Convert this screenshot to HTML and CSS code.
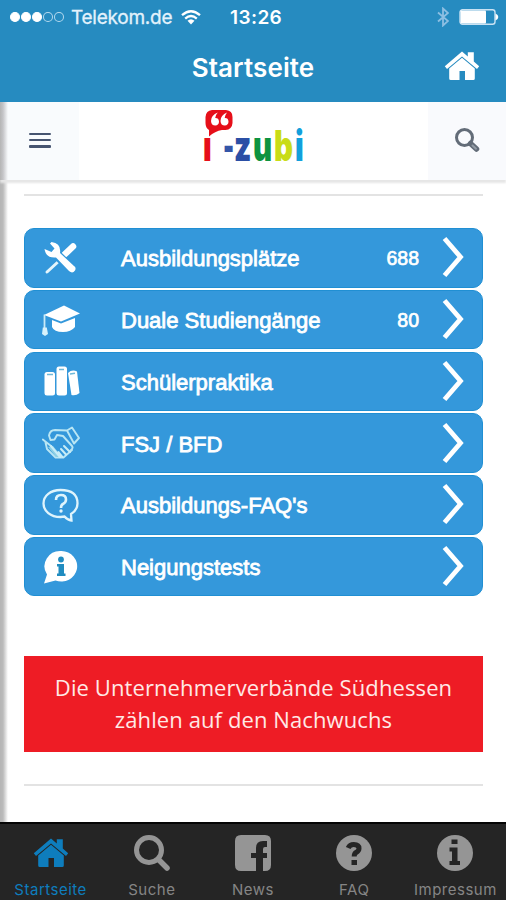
FILE: index.html
```
<!DOCTYPE html>
<html lang="de">
<head>
    <meta charset="UTF-8">
    <title>i-zubi</title>
    <link rel="stylesheet" href="styles.css">
</head>
<body>
<svg class="defs">
    <symbol id="home" viewBox="0 0 36 30">
        <path d="M.8 15.200L18 .6l5.800 4.900V1.200h6v9.400L35.200 15.200l-2.200 2.700L18 5.400 3 17.900z"/>
        <path d="M5.200 17.500L18 6.700l12.800 10.800V27.500q0 1.500-1.500 1.500H21v-9h-5.500v9H6.700q-1.500 0-1.500-1.500z"/>
    </symbol>
</svg>
<div id="wrap">
    <div class="head">
        <div class="status">
            <div class="dots"><i class="on"></i><i class="on"></i><i class="on"></i><i></i><i></i></div>
            <span class="carrier">Telekom.de</span>
            <svg class="wifi" viewBox="0 0 20 15"><path d="M1 5.200Q10-2.800 19 5.200M4.200 8.600Q10 3.500 15.800 8.600" fill="none" stroke="#fff" stroke-width="2.300"/><path d="M6.500 10.800Q10 7.800 13.500 10.800L10 14.500z" fill="#fff"/></svg>
            <span class="time">13:26</span>
            <svg class="bt" viewBox="0 0 12 20"><path d="M1 5.500l10 8.500-5 4.500v-17l5 4.500L1 14.500" fill="none" stroke="#8dbfe2" stroke-width="1.800"/></svg>
            <svg class="battery" viewBox="0 0 40 16"><rect x="1" y=".8" width="35" height="14.400" rx="2.500" fill="none" stroke="#c9e2f3" stroke-width="1.400"/><rect x="1.500" y="1.500" width="25.500" height="13" rx="1" fill="#fff"/><path d="M36.500 4.500q2.800 1 2.800 3.500t-2.800 3.500z" fill="#fff"/></svg>
        </div>
        <div class="title">
            <h1>Startseite</h1>
            <svg class="home"><use href="#home"/></svg>
        </div>
    </div>
    <div class="page">
        <div class="bar">
            <div class="menu"><span></span><span></span><span></span></div>
            <div class="logo">
                <svg class="bubble" viewBox="0 0 28 28"><path d="M7 1H21Q27.500 1.500 27.500 8v6q-.5 6.500-7 7H17Q10 22 4 27.500V21Q.5 19 .5 14V8Q1 1.500 7 1z" fill="#e60f19"/><path d="M12.800 3.500Q6 6 6 12q.3 4.500 4.300 4.500 3.700-.3 3.700-4-.3-3.600-3.800-3.400.2-3 2.600-5.600zM22 3.500Q15.500 6 15.500 12q.3 4.500 4.300 4.500 3.700-.3 3.700-4-.3-3.600-3.800-3.400.2-3 2.300-5.600z" fill="#fff"/></svg>
                <b class="l1">ı</b><b class="l2">-</b><b class="l3">z</b><b class="l4">u</b><b class="l5">b</b><b class="l6">i</b>
            </div>
            <div class="find">
                <svg viewBox="0 0 26 26"><circle cx="10.500" cy="10.500" r="8" fill="none" stroke="#636c78" stroke-width="3"/><path d="M16.500 16.500l6 5.500" stroke="#636c78" stroke-width="5.500" stroke-linecap="round"/><path d="M18.500 18.500l3.500 3.200" stroke="#939ba5" stroke-width="2" stroke-linecap="round"/></svg>
            </div>
        </div>
        <div class="content">
            <hr>
            <ul class="list">
                <li>
                    <svg class="ico" viewBox="0 0 38 34"><path d="M5 31L17 20" stroke="#e5f5fb" stroke-width="3" stroke-linecap="round"/><path d="M22.500 13.500L31 5.500" stroke="#fff" stroke-width="6.500" stroke-linecap="round"/><path d="M11 10L29 27.500" stroke="#3498db" stroke-width="9.500"/><path d="M2.500 8Q4 17.500 14 16.500L27 30q3.500 3 6-.5 1.500-3-1-4.500L18 12Q19.500 2.500 9.500 1L8 2.500l4.500 5L9.500 11z" fill="#fff"/></svg>
                    <span class="name">Ausbildungsplätze</span><span class="num">688</span>
                    <svg class="arrow" viewBox="0 0 22 42"><path d="M2.500 2.500L18.500 21 2.500 39.500" /></svg>
                </li>
                <li>
                    <svg class="ico" viewBox="0 0 38 34"><path d="M2 12L22 2.500l16 8L19 18.500z" fill="#fff"/><path d="M2.500 11.500V28" stroke="#c9eaf8" stroke-width="1.800"/><path d="M.8 24.500h4L6 31l-3 2-3-2z" fill="#d8f2fb"/><path d="M10 17l9 3.500L33 15v9q-4 5-12 5-9 0-11-5z" fill="#fff"/></svg>
                    <span class="name">Duale Studiengänge</span><span class="num">80</span>
                    <svg class="arrow" viewBox="0 0 22 42"><path d="M2.500 2.500L18.500 21 2.500 39.500" /></svg>
                </li>
                <li>
                    <svg class="ico" viewBox="0 0 38 34"><rect x="2.500" y="8" width="10.500" height="23.500" rx="2.500" fill="#fff"/><rect x="14.500" y="2.500" width="10.500" height="29" rx="2.500" fill="#fff"/><path d="M26 9q4-4 9-1.500L37.500 29q-3.500 3-8 2z" fill="#fff"/><path d="M5 10.500h6M17 5.500h5M28 10l5-.7" stroke="#6fb9d9" stroke-width="1.500"/></svg>
                    <span class="name">Schülerpraktika</span>
                    <svg class="arrow" viewBox="0 0 22 42"><path d="M2.500 2.500L18.500 21 2.500 39.500" /></svg>
                </li>
                <li>
                    <svg class="ico" viewBox="0 0 38 34"><g fill="none" stroke="#b9e6f4" stroke-width="1.900" stroke-linejoin="round" stroke-linecap="round"><path d="M25 4.500L30 1.500 37 12l-5 5.500zM25 4.500L13 4Q8 4 7 9.500L8.500 14l4-.500 2.500-4.500 6 1 9 10q1.500 2-1 4"/><path d="M.8 13.500L9 20M3.500 16.500L5 23l8.500 8.500h8L30 24"/></g><path d="M6 21l5-1 9 11h-6z" fill="#8cd0e6"/><path d="M9 20l9 11M16.500 26l4 5M19 23l5 5.500M22 20l6 6" stroke="#c8edf7" stroke-width="2" stroke-linecap="round"/></svg>
                    <span class="name">FSJ / BFD</span>
                    <svg class="arrow" viewBox="0 0 22 42"><path d="M2.500 2.500L18.500 21 2.500 39.500" /></svg>
                </li>
                <li>
                    <svg class="ico" viewBox="0 0 38 34"><path d="M18.500 2C8.500 2 1.500 8 1.500 15.500S8.500 29 18.500 29l4-.5Q25.500 32 29.500 32.500l-.5-6.500Q35.500 22 35.500 15.500 35.500 2 18.500 2z" fill="none" stroke="#dff4fc" stroke-width="2.300"/><path d="M14 12q0-5 5-5t5 4.500q0 3-3 4.500-2 1-2 4" fill="none" stroke="#dff4fc" stroke-width="2.600"/><circle cx="19" cy="23" r="1.700" fill="#dff4fc"/></svg>
                    <span class="name">Ausbildungs-FAQ's</span>
                    <svg class="arrow" viewBox="0 0 22 42"><path d="M2.500 2.500L18.500 21 2.500 39.500" /></svg>
                </li>
                <li>
                    <svg class="ico" viewBox="0 0 38 34"><path d="M19.500 1a15.800 15.300 0 1 1-6 29.500L2 33.500l3-9A15.800 15.300 0 0 1 19.500 1z" fill="#fff"/><circle cx="19" cy="9.500" r="2.900" fill="#208cc0"/><path d="M15 14h7v9.500h1.500V26H15v-2.500h1.500v-7H15z" fill="#208cc0"/></svg>
                    <span class="name">Neigungstests</span>
                    <svg class="arrow" viewBox="0 0 22 42"><path d="M2.500 2.500L18.500 21 2.500 39.500" /></svg>
                </li>
            </ul>
            <div class="banner">Die Unternehmerverbände Südhessen<br>zählen auf den Nachwuchs</div>
            <hr>
        </div>
    </div>
    <div class="tabs">
        <a class="active"><svg class="thome"><use href="#home"/></svg><span>Startseite</span></a>
        <a><svg viewBox="0 0 36 36"><circle cx="15" cy="15" r="12.500" fill="none" stroke="#959595" stroke-width="5"/><path d="M24.500 24.500l8.500 8.500" stroke="#959595" stroke-width="5.500" stroke-linecap="round"/></svg><span>Suche</span></a>
        <a><svg viewBox="0 0 36 36"><path d="M6 0h24q6 0 6 6v24q0 6-6 6h-2V23h4v-5h-4v-4q0-2 2-2h2V6h-4q-7 0-7 7v5h-5v5h5v13H6q-6 0-6-6V6q0-6 6-6z"/></svg><span>News</span></a>
        <a><svg viewBox="0 0 36 36"><circle cx="18" cy="18" r="18"/><path d="M12.200 13q1.500-3.500 5.600-3.500 5.200 0 5.200 4 0 2.200-2.600 3.800-2.200 1.200-2.200 4.200" fill="none" stroke="#252525" stroke-width="5"/><path d="M15.500 25h5.500v5h-5.500z" fill="#252525"/></svg><span>FAQ</span></a>
        <a><svg viewBox="0 0 36 36"><circle cx="18" cy="18" r="18"/><path d="M14.500 4.500h6v4.500h-6zM12.500 12.500h8V26H23v4H12.500v-4H15v-9.500h-2.500z" fill="#252525"/></svg><span>Impressum</span></a>
    </div>
</div>
</body>
</html>
```
FILE: styles.css
```
*{
    margin:0;
    padding:0;
    border:0;
    box-sizing: border-box;
    list-style: none;
}
body,html{
    height: 100%;
    overflow: hidden;
}
svg{
    display: block;
    flex-shrink: 0;
}
.defs{
    position: absolute;
    width:0;
    height:0;
}
#wrap{
    width:506px;
    height:900px;
    display: flex;
    flex-direction: column;
    background: #fff;
    font-family: Inter,Roboto,sans-serif;
}
/*head*/
.head{
    height:102px;
    background: #268bc0;
    color: #fff;
}
.status{
    height:34px;
    display: flex;
    align-items: center;
    padding:0 7px 0 10px;
}
.dots{
    display: flex;
    gap:1.200px;
    width:54px;
}
.dots i{
    width:10px;
    height:10px;
    border:1px solid #b5d9ee;
    border-radius: 50%;
}
.dots .on{
    background: #fff;
    border-color: #fff;
}
.carrier{
    width:110px;
    margin-left: 7px;
    font-size: 19px;
    letter-spacing: -.25px;
    color: #e3f2fc;
    -webkit-text-stroke: .3px #e3f2fc;
}
.wifi{
    width:20px;
    height:15px;
}
.time{
    width:60px;
    margin-left: 29px;
    font-size: 19px;
    font-weight: 600;
    letter-spacing: .4px;
}
.bt{
    width:12px;
    height:20px;
    margin-left: auto;
}
.battery{
    width:40px;
    height:16px;
    margin-left: 10px;
}
.title{
    height:66px;
    display: grid;
    grid-template-columns: 80px 1fr 80px;
    align-items: center;
}
.title h1{
    grid-column: 2;
    text-align: center;
    font-size: 26px;
    font-weight: 600;
    letter-spacing: .1px;
}
.title .home{
    width:36px;
    height:30px;
    margin-left: 18px;
    margin-bottom: 3px;
    fill: #fff;
}
/*page*/
.page{
    height:720px;
    background: linear-gradient(to right,#b5b5b5 0,#bbb 3px,#fff 8px);
}
.bar{
    height:78px;
    display: flex;
    justify-content: space-between;
    box-shadow: 0 3px 2px #e6e6e6;
    background: linear-gradient(to right,#b5b5b5 0,#c5c5c8 3px,#f9fbfd 8px,#f9fbfd 79px,#fff 79px);
}
.menu{
    width:79px;
    padding:30.500px 0 0 29px;
}
.menu span{
    display: block;
    width:22px;
    height:2.600px;
    margin-bottom: 3.800px;
    border-radius: 1px;
    background: #465470;
}
.find{
    width:78px;
    padding:25px 0 0 26px;
    background: #f9fafd;
}
.find svg{
    width:26px;
    height:26px;
}
.logo{
    position: relative;
    display: flex;
    width:103px;
    height:65px;
    margin-left: 2px;
    padding-top: 21px;
    font-size: 42px;
    line-height: 46px;
    font-weight: 900;
}
.bubble{
    position: absolute;
    left:2px;
    top:7px;
    width:28px;
    height:28px;
}
.logo b{
    transform: scaleX(.7);
    transform-origin: 0 0;
}
.l1{
    width:20px;
    color: #e60f19;
}
.logo .l2{
    width:11px;
    transform: scaleX(.56);
    color: #3455a8;
}
.l3{
    width:19px;
    color: #2b4fa5;
}
.l4{
    width:21px;
    color: #0d9340;
}
.l5{
    width:21px;
    color: #c9dc17;
}
.l6{
    width:10px;
    color: #12a0dc;
}
.content{
    padding:14px 23px 0 24px;
}
hr{
    height:2px;
    background: #e3e3e3;
}
.list{
    display: flex;
    flex-direction: column;
    gap:2.300px;
    margin-top: 32px;
}
.list li{
    display: flex;
    align-items: center;
    height:59.500px;
    padding-right: 18px;
    border:1.500px solid #208fd3;
    border-radius: 10px;
    background: #3498db;
    color: #fff;
    font-family: "Liberation Sans",Arial,sans-serif;
}
.ico{
    width:38px;
    height:34px;
    margin-left: 17px;
}
.name{
    margin:3px 0 0 41px;
    font-size: 22px;
    white-space: nowrap;
    -webkit-text-stroke: .8px #fff;
}
.num{
    margin-left: auto;
    margin-top: 2px;
    font-size: 19.500px;
    -webkit-text-stroke: .7px #fff;
}
.arrow{
    width:22px;
    height:42px;
    margin-left: auto;
    margin-bottom: 1px;
}
.num + .arrow{
    margin-left: 23px;
}
.arrow path{
    fill: none;
    stroke: #fff;
    stroke-width: 4.800;
}
.banner{
    height:96px;
    margin:60px 0 32px;
    padding-top: 15px;
    background: #ee1c25;
    color: #ffe9e6;
    font-family: "Open Sans","Noto Sans",sans-serif;
    font-size: 22px;
    line-height: 32px;
    letter-spacing: .1px;
    text-align: center;
    white-space: nowrap;
}
/*tabs*/
.tabs{
    display: flex;
    height:78px;
    border-top: 2px solid #050505;
    background: #252525;
}
.tabs a{
    flex:1;
    display: flex;
    flex-direction: column;
    align-items: center;
    padding-top: 11px;
    color: #858585;
    font-size: 15px;
    line-height: 20px;
    letter-spacing: .5px;
}
.tabs svg{
    width:36px;
    height:36px;
    fill: #959595;
}
.tabs .thome{
    height:30px;
    margin:3px 0;
    fill: #0e7dbd;
}
.tabs span{
    margin-top: 9px;
}
.tabs .active{
    color: #0e7dbd;
}
```
